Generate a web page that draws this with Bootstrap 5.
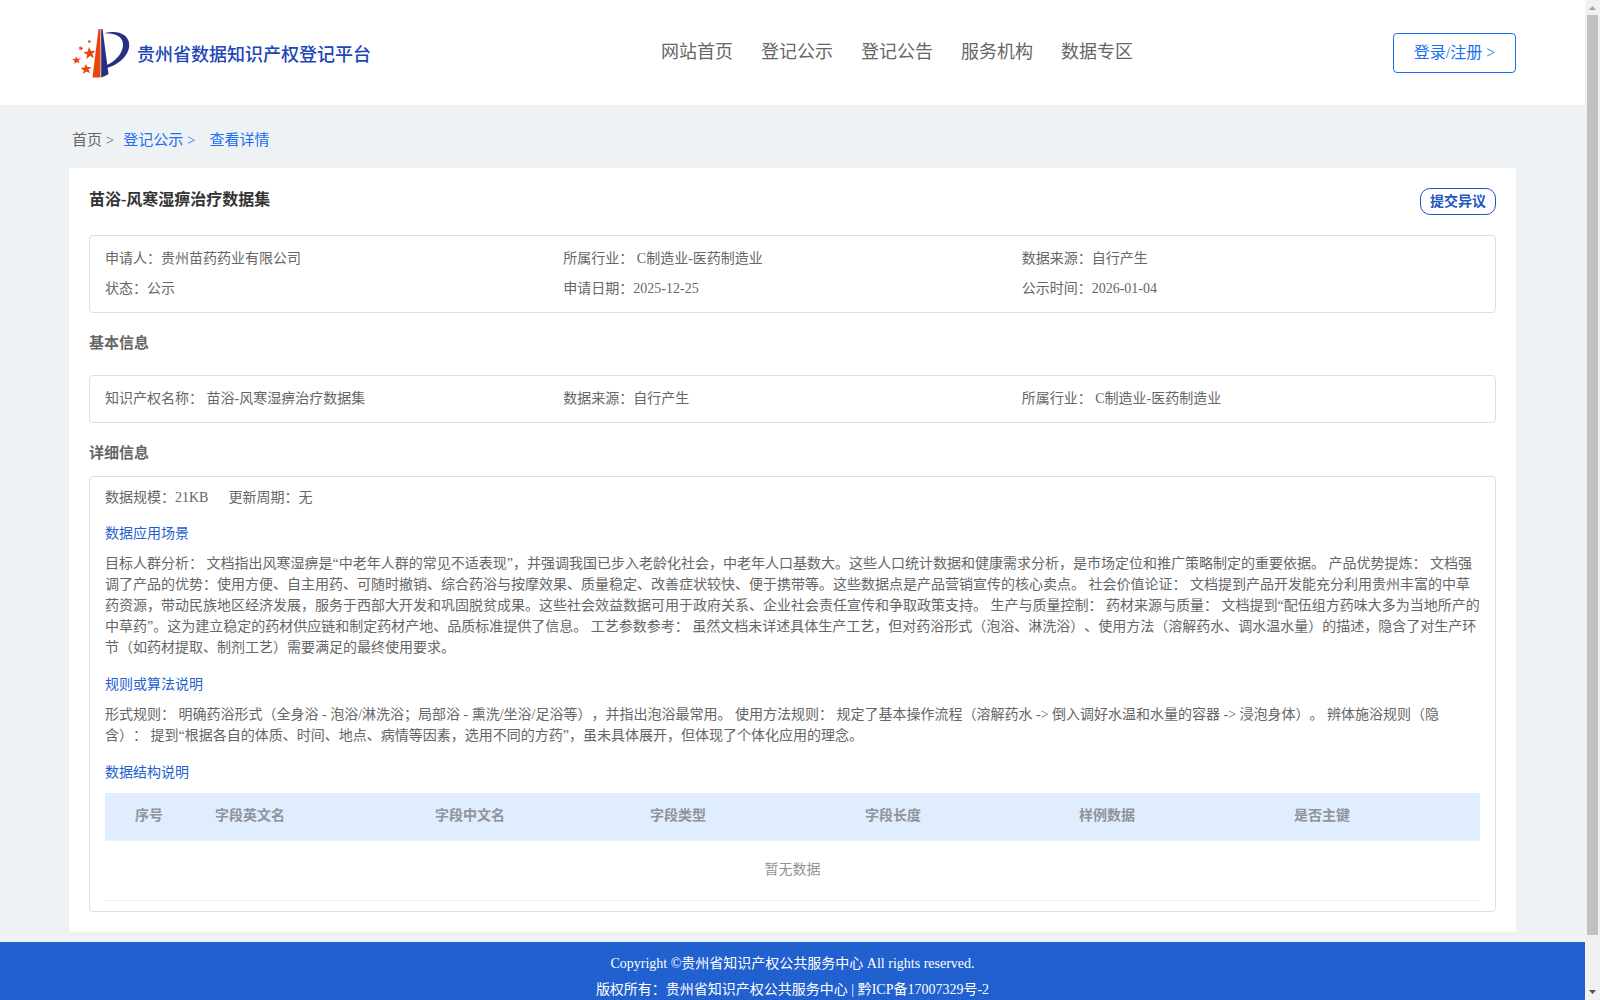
<!DOCTYPE html>
<html lang="zh-CN">
<head>
<meta charset="utf-8">
<meta name="viewport" content="width=device-width, initial-scale=1">
<title>贵州省数据知识产权登记平台</title>
<link href="https://cdn.jsdelivr.net/npm/bootstrap@5.3.0/dist/css/bootstrap.min.css" rel="stylesheet">
<style>
  body { font-family: "Liberation Serif", "Noto Sans CJK SC", serif; font-size: 14px; line-height: 21px; color: #666; background: #eef2f5; text-spacing-trim: space-all; }
  .wrap { margin: 0 69px; }
  .site-head { height: 105px; }
  .brand-name { font-size: 18px; font-weight: 500; color: #2145b8; line-height: 24px; margin-left: 7px; padding-top: 2px; white-space: nowrap; }
  .brand-box { width: 592px; padding: 2px 0 0 3px; }
  .main-nav { gap: 28px; font-size: 18px; line-height: 24px; margin-bottom: 1px; }
  .main-nav a, .crumbs a { color: inherit; text-decoration: none; }
  .btn-login { width: 123px; height: 40px; border: 1px solid #1a6ff0; border-radius: 4px; color: #1a6ff0; font-size: 16px; padding: 0; line-height: 38px; }
  .crumbs { height: 63px; font-size: 15px; padding: 8px 0 0 3px; }
  .crumbs .home { margin-right: 9px; }
  .crumbs .here { margin-left: 14px; }
  .crumbs a.lit { color: #1a6ff0; }
  .panel { height: 764px; padding: 20px; margin-bottom: 10px; }
  .panel-title { font-size: 16px; font-weight: 700; color: #333; line-height: 24px; }
  .btn-object { width: 76px; height: 27px; border: 1px solid #1d57c2; border-radius: 10px; color: #1d57c2; font-size: 14px; font-weight: 700; padding: 0; line-height: 25px; }
  .title-bar { height: 47px; }
  .info-box { border: 1px solid #dcdfe0; border-radius: 4px; padding: 0 15px; }
  .info-grid { padding-top: 8px; padding-bottom: 8px; line-height: 30px; }
  .detail { padding-bottom: 10px; }
  .meta-line { gap: 20px; padding: 10px 0 15px; }
  .sec { font-size: 15px; font-weight: 700; line-height: 21px; margin: 20px 0 21px; }
  .sec-tight { margin-bottom: 12px; }
  .sub { font-size: 14px; font-weight: 400; color: #1f5fcf; line-height: 21px; margin: 0; }
  .prose { white-space: nowrap; margin: 9px 0 16px; }
  .fields { table-layout: fixed; width: 1375px; margin: 10px 0 0; color: #909399; border-collapse: separate; border-spacing: 0; }
  .fields th { background: #e0edff; height: 48px; padding: 0 10px 2px; border-bottom: 1px solid #ebeef5; font-weight: 700; vertical-align: middle; line-height: 23px; }
  .fields th.idx { padding-right: 22px; text-align: center; }
  .fields td { height: 60px; text-align: center; border-bottom: 1px solid #ebeef5; vertical-align: middle; padding: 0 0 2px; }
  .site-foot { height: 100px; background: #2160cf; color: #fff; line-height: 26px; padding-top: 9px; }
  .scroll-rail { width: 15px; background: #f1f1f1; }
  .scroll-rail i { display: block; width: 11px; height: 920px; background: #c1c1c1; }
</style>
<script src="https://cdn.jsdelivr.net/npm/bootstrap@5.3.0/dist/js/bootstrap.bundle.min.js"></script>
</head>
<body class="vh-100 overflow-hidden d-flex">
<div class="flex-grow-1 overflow-hidden">
  <header class="site-head bg-white">
    <div class="wrap d-flex align-items-center h-100">
      <div class="brand-box d-flex align-items-center">
        <svg width="58" height="50" viewBox="0 0 58 50" aria-hidden="true">
          <path fill="#e8440e" d="M26.500 0h2v48.500h-8z"/>
          <path fill="#272f80" d="M29.200 0h1.300L36.500 45Q33 47.500 29.200 48.500z"/>
          <path fill="#272f80" d="M32 4.200C45 .5 57.200 5 57.200 16c0 11-11.500 20-22 23l-.8-2.800C44 32 51 24 51 15.500 51 7 43 3.800 32 4.200z"/>
          <g fill="#e8440e">
            <path d="M17 18l2 4 4.500-.2-3.300 3 1.800 4.200-4-2-3.500 3 .6-4.500-3.900-2.200 4.500-.8z"/>
            <path d="M4 27.500l1.500 2.200 3-.3-2 2 1 3-2.600-1.300-2.600 2 .3-3.200L.3 30l2.900-.3z"/>
            <path d="M14 35l1.400 3 4-.1-2.900 2.700 1.500 3.700-3.500-1.900-3.300 2.600.6-3.800-3.300-2.100 4-.6z"/>
            <path d="M9 17l.7 1.500 1.800.4-1.500 1 .1 1.700-1.500-1-1.700.5.7-1.600-1-1.400 1.700.1z"/>
            <circle cx="17.300" cy="12.500" r="1.300"/>
          </g>
        </svg>
        <span class="brand-name">贵州省数据知识产权登记平台</span>
      </div>
      <nav class="main-nav d-flex">
        <a href="#">网站首页</a><a href="#">登记公示</a><a href="#">登记公告</a><a href="#">服务机构</a><a href="#">数据专区</a>
      </nav>
      <button class="btn btn-login ms-auto">登录/注册 &gt;</button>
    </div>
  </header>

  <div class="wrap">
    <nav class="crumbs d-flex align-items-center">
      <span class="home"><a href="#">首页</a> &gt;</span>
      <a href="#" class="lit">登记公示 &gt;</a>
      <a href="#" class="lit here">查看详情</a>
    </nav>

    <main class="panel bg-white">
      <div class="title-bar d-flex justify-content-between align-items-start">
        <h1 class="panel-title m-0">苗浴-风寒湿痹治疗数据集</h1>
        <button class="btn btn-object">提交异议</button>
      </div>

      <div class="info-box info-grid">
        <div class="row g-0">
          <div class="col-4">申请人：贵州苗药药业有限公司</div>
          <div class="col-4">所属行业： C制造业-医药制造业</div>
          <div class="col-4">数据来源：自行产生</div>
          <div class="col-4">状态：公示</div>
          <div class="col-4">申请日期：2025-12-25</div>
          <div class="col-4">公示时间：2026-01-04</div>
        </div>
      </div>

      <h2 class="sec">基本信息</h2>
      <div class="info-box info-grid">
        <div class="row g-0">
          <div class="col-4">知识产权名称： 苗浴-风寒湿痹治疗数据集</div>
          <div class="col-4">数据来源：自行产生</div>
          <div class="col-4">所属行业： C制造业-医药制造业</div>
        </div>
      </div>

      <h2 class="sec sec-tight">详细信息</h2>
      <div class="info-box detail">
        <div class="meta-line d-flex"><span>数据规模：21KB</span><span>更新周期：无</span></div>
        <h3 class="sub">数据应用场景</h3>
        <p class="prose">目标人群分析： 文档指出风寒湿痹是“中老年人群的常见不适表现”，并强调我国已步入老龄化社会，中老年人口基数大。这些人口统计数据和健康需求分析，是市场定位和推广策略制定的重要依据。 产品优势提炼： 文档强<br>调了产品的优势：使用方便、自主用药、可随时撤销、综合药浴与按摩效果、质量稳定、改善症状较快、便于携带等。这些数据点是产品营销宣传的核心卖点。 社会价值论证： 文档提到产品开发能充分利用贵州丰富的中草<br>药资源，带动民族地区经济发展，服务于西部大开发和巩固脱贫成果。这些社会效益数据可用于政府关系、企业社会责任宣传和争取政策支持。 生产与质量控制： 药材来源与质量： 文档提到“配伍组方药味大多为当地所产的<br>中草药”。这为建立稳定的药材供应链和制定药材产地、品质标准提供了信息。 工艺参数参考： 虽然文档未详述具体生产工艺，但对药浴形式（泡浴、淋洗浴）、使用方法（溶解药水、调水温水量）的描述，隐含了对生产环<br>节（如药材提取、制剂工艺）需要满足的最终使用要求。</p>
        <h3 class="sub">规则或算法说明</h3>
        <p class="prose">形式规则： 明确药浴形式（全身浴 - 泡浴/淋洗浴；局部浴 - 熏洗/坐浴/足浴等），并指出泡浴最常用。 使用方法规则： 规定了基本操作流程（溶解药水 -&gt; 倒入调好水温和水量的容器 -&gt; 浸泡身体）。 辨体施浴规则（隐<br>含）： 提到“根据各自的体质、时间、地点、病情等因素，选用不同的方药”，虽未具体展开，但体现了个体化应用的理念。</p>
        <h3 class="sub">数据结构说明</h3>
        <table class="fields">
          <colgroup><col style="width:100px"><col style="width:220px"><col style="width:215px"><col style="width:215px"><col style="width:214px"><col style="width:215px"><col></colgroup>
          <thead><tr><th class="idx">序号</th><th>字段英文名</th><th>字段中文名</th><th>字段类型</th><th>字段长度</th><th>样例数据</th><th>是否主键</th></tr></thead>
          <tbody><tr><td colspan="7">暂无数据</td></tr></tbody>
        </table>
      </div>
    </main>
  </div>

  <footer class="site-foot text-center">
    <div>Copyright ©贵州省知识产权公共服务中心 All rights reserved.</div>
    <div>版权所有：贵州省知识产权公共服务中心 | 黔ICP备17007329号-2</div>
  </footer>
</div>
<div class="scroll-rail d-flex flex-column justify-content-between align-items-center flex-shrink-0 pb-1" aria-hidden="true">
  <svg width="15" height="15" viewBox="0 0 15 15"><path fill="#a3a3a3" d="M4 10h7L7.500 6z"/></svg>
  <i></i>
  <span class="flex-grow-1"></span>
  <svg width="15" height="15" viewBox="0 0 15 15"><path fill="#505050" d="M4 9h7l-3.500 4z"/></svg>
</div>
</body>
</html>
